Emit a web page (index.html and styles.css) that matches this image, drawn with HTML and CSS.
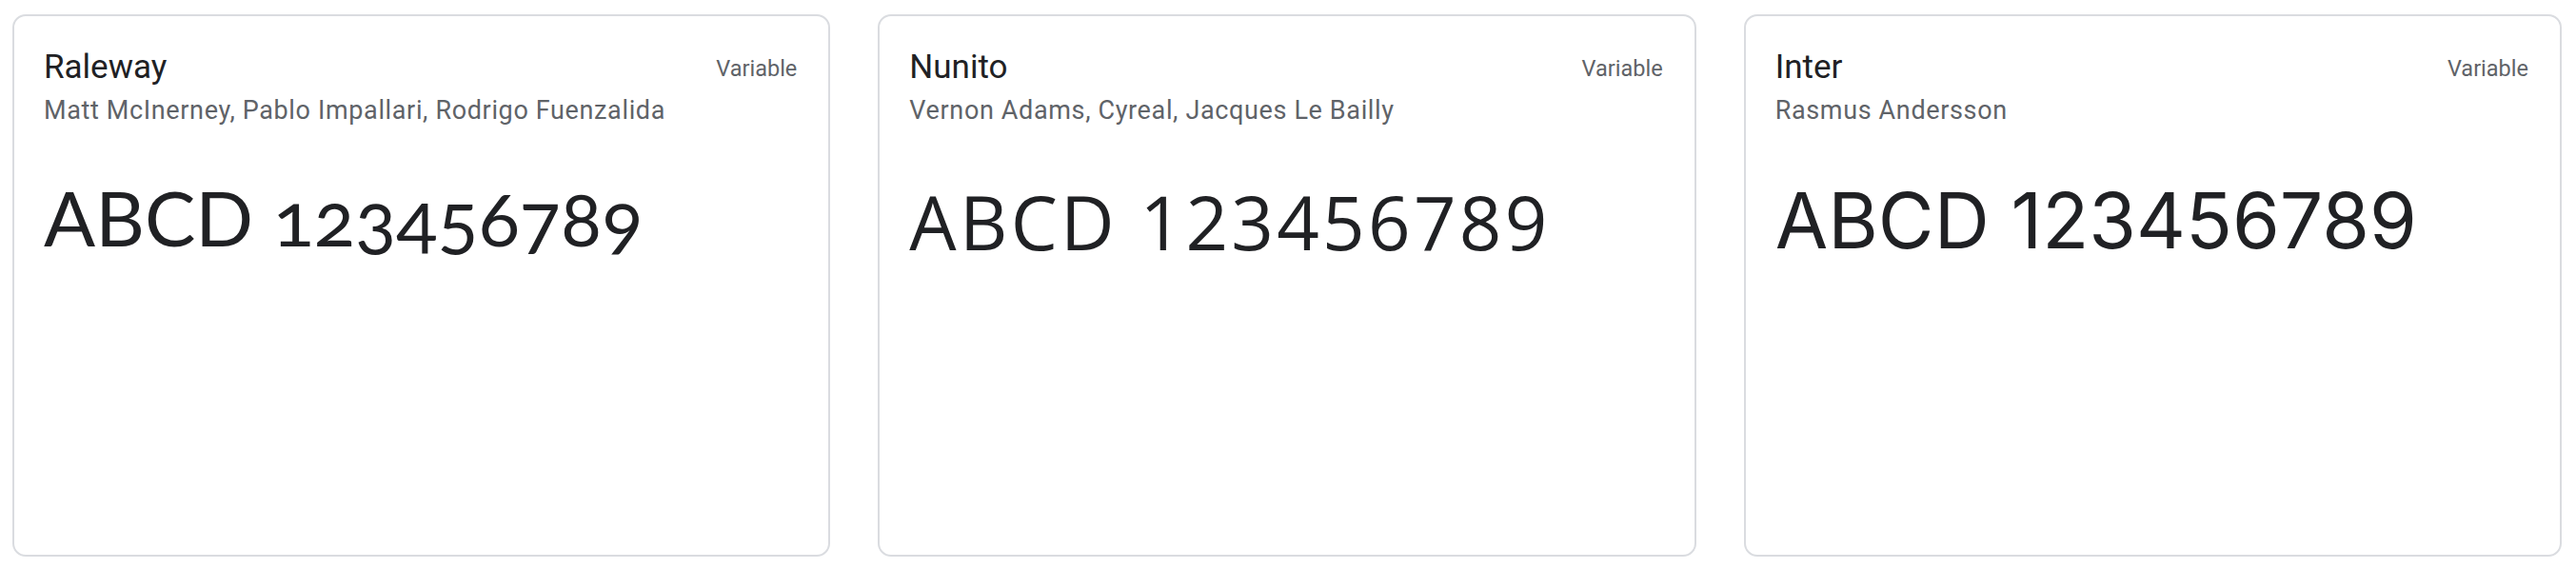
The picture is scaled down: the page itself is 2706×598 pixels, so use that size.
FILE: index.html
```html
<!DOCTYPE html>
<html lang="en">
<head>
<meta charset="utf-8">
<title>Font cards</title>
<link rel="stylesheet" href="styles.css">
</head>
<body>
<main class="grid">
  <article class="card">
    <div class="head">
      <div class="meta">
        <h2 class="name">Raleway</h2>
        <p class="authors">Matt McInerney, Pablo Impallari, Rodrigo Fuenzalida</p>
      </div>
      <span class="tag">Variable</span>
    </div>
    <p class="sample sample-raleway">ABCD 123456789</p>
  </article>
  <article class="card">
    <div class="head">
      <div class="meta">
        <h2 class="name">Nunito</h2>
        <p class="authors">Vernon Adams, Cyreal, Jacques Le Bailly</p>
      </div>
      <span class="tag">Variable</span>
    </div>
    <p class="sample sample-nunito">ABCD 123456789</p>
  </article>
  <article class="card">
    <div class="head">
      <div class="meta">
        <h2 class="name">Inter</h2>
        <p class="authors">Rasmus Andersson</p>
      </div>
      <span class="tag">Variable</span>
    </div>
    <p class="sample sample-inter">ABCD 123456789</p>
  </article>
</main>
</body>
</html>
```
FILE: styles.css
```css
* { box-sizing: border-box; }
html, body { margin: 0; padding: 0; background: #ffffff; }
body { font-family: Roboto, "Liberation Sans", sans-serif; color: #202124; }

.grid {
  display: grid;
  grid-template-columns: repeat(3, 1fr);
  gap: 50px;
  padding: 15px 15px 13px 13px;
  height: 598px;
}

.card {
  border: 2px solid #dadce0;
  border-radius: 14px;
  padding: 32px 33px 0 31px;
  display: flex;
  flex-direction: column;
  background: #fff;
}

.head {
  display: flex;
  justify-content: space-between;
  align-items: flex-start;
}

.name {
  margin: 0;
  font-size: 35px;
  line-height: 44px;
  font-weight: 400;
  color: #202124;
}

.authors {
  margin: 5px 0 0;
  font-size: 27px;
  letter-spacing: 0.64px;
  line-height: 36px;
  color: #5f6368;
}

.tag {
  margin-top: 7px;
  font-size: 23.5px;
  line-height: 32px;
  color: #5f6368;
}

.sample {
  margin: 48px 0 0;
  line-height: 100px;
  color: #202124;
  white-space: nowrap;
}

.sample-raleway {
  font-family: Lato, sans-serif;
  font-size: 80px;
  font-variant-numeric: oldstyle-nums;
  margin-top: 44px;
}

.sample-nunito {
  font-family: "Open Sans", sans-serif;
  font-size: 78px;
  letter-spacing: 3.3px;
  margin-top: 49px;
}

.sample-inter {
  font-family: Inter, sans-serif;
  font-size: 80.5px;
  margin-top: 48px;
}
```
